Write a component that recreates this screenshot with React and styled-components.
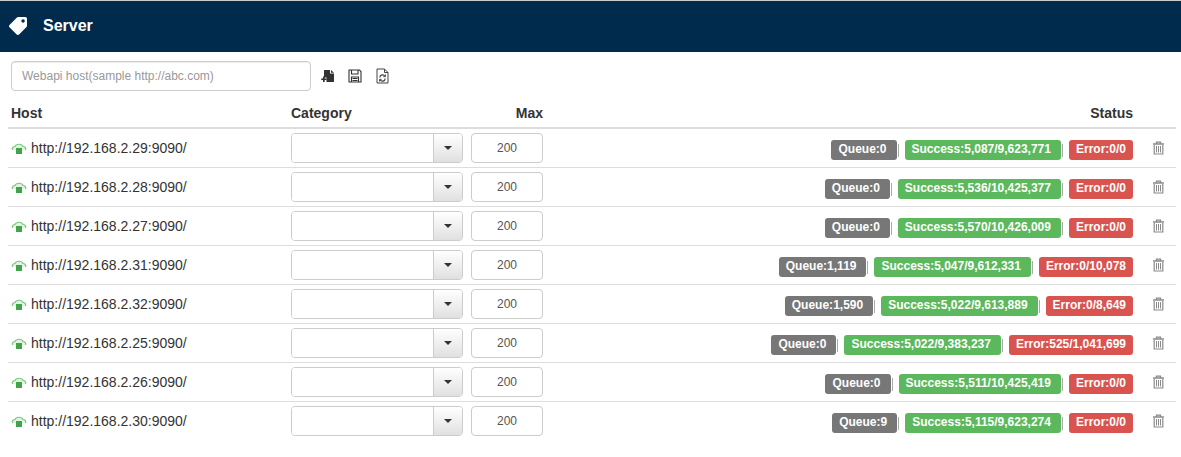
import React from "react";
import styled, { createGlobalStyle } from "styled-components";
import { FaTag } from "react-icons/fa";

const GlobalStyle = createGlobalStyle`
  html, body {
    margin: 0;
    padding: 0;
    background: #fff;
    font-family: "Liberation Sans", Arial, sans-serif;
    font-size: 14px;
    color: #333;
  }
`;

const servers = [
  { host: "http://192.168.2.29:9090/", queue: "0", success: "5,087/9,623,771", error: "0/0" },
  { host: "http://192.168.2.28:9090/", queue: "0", success: "5,536/10,425,377", error: "0/0" },
  { host: "http://192.168.2.27:9090/", queue: "0", success: "5,570/10,426,009", error: "0/0" },
  { host: "http://192.168.2.31:9090/", queue: "1,119", success: "5,047/9,612,331", error: "0/10,078" },
  { host: "http://192.168.2.32:9090/", queue: "1,590", success: "5,022/9,613,889", error: "0/8,649" },
  { host: "http://192.168.2.25:9090/", queue: "0", success: "5,022/9,383,237", error: "525/1,041,699" },
  { host: "http://192.168.2.26:9090/", queue: "0", success: "5,511/10,425,419", error: "0/0" },
  { host: "http://192.168.2.30:9090/", queue: "9", success: "5,115/9,623,274", error: "0/0" },
];

const columns = "283px 180px 80px 1fr 43px";

const Page = styled.div`
  width: 1181px;
  height: 457px;
  overflow: hidden;
  border-top: 1px solid #c8cdd2;
  box-sizing: border-box;
  background: #fff;
`;

const TitleBar = styled.div`
  height: 51px;
  background: #002b4d;
  color: #fff;
  display: flex;
  align-items: center;
  padding: 0 0 2px 9px;
  box-sizing: border-box;
  gap: 16px;
  font-size: 16px;
  font-weight: bold;
`;

const TagIcon = styled(FaTag)`
  width: 18px;
  height: 18px;
  transform: scaleX(-1);
`;

const Toolbar = styled.div`
  display: flex;
  align-items: center;
  height: 30px;
  margin: 9px 0 0 11px;
`;

const HostInput = styled.input`
  width: 300px;
  height: 30px;
  box-sizing: border-box;
  border: 1px solid #ccc;
  border-radius: 4px;
  padding: 0 10px;
  font: 12px "Liberation Sans", Arial, sans-serif;
  box-shadow: inset 0 1px 1px rgba(0, 0, 0, 0.075);
  &::placeholder {
    color: #999;
    opacity: 1;
  }
`;

const ToolIcons = styled.div`
  display: flex;
  align-items: center;
  gap: 13px;
  margin-left: 10px;
  color: #333;
`;

const Table = styled.div`
  margin: 0 5px 0 8px;
`;

const HeadRow = styled.div`
  display: grid;
  grid-template-columns: ${columns};
  height: 38px;
  box-sizing: border-box;
  align-items: center;
  padding-top: 8px;
  border-bottom: 2px solid #ddd;
  font-size: 14px;
  font-weight: bold;
  color: #333;
`;

const HeadCell = styled.div`
  padding-left: ${(p) => p.$pad || 0}px;
  padding-right: ${(p) => (p.$right ? 43 : 0)}px;
  text-align: ${(p) => (p.$align ? "right" : "left")};
  grid-column: ${(p) => (p.$right ? "4 / 6" : "auto")};
`;

const MaxLabel = styled.span`
  display: block;
  width: 72px;
  text-align: right;
`;

const Row = styled.div`
  display: grid;
  grid-template-columns: ${columns};
  height: 39px;
  box-sizing: border-box;
  align-items: center;
  border-bottom: 1px solid #ddd;
  &:last-child {
    border-bottom-color: transparent;
  }
`;

const HostCell = styled.div`
  display: flex;
  align-items: center;
  gap: 4px;
  padding-left: 3px;
  font-size: 14px;
  color: #333;
`;

const CategoryCombo = styled.div`
  display: flex;
  width: 172px;
  height: 30px;
  box-sizing: border-box;
  border: 1px solid #ccc;
  border-radius: 4px;
  overflow: hidden;
`;

const ComboText = styled.div`
  flex: 1;
  background: #fff;
`;

const ComboButton = styled.div`
  width: 28px;
  border-left: 1px solid #ccc;
  background: linear-gradient(to bottom, #fff, #e0e0e0);
  display: flex;
  align-items: center;
  justify-content: center;
  &::after {
    content: "";
    border-top: 4px solid #333;
    border-left: 4px solid transparent;
    border-right: 4px solid transparent;
  }
`;

const MaxInput = styled.div`
  width: 72px;
  height: 30px;
  box-sizing: border-box;
  border: 1px solid #ccc;
  border-radius: 4px;
  display: flex;
  align-items: center;
  justify-content: center;
  font-size: 12px;
  color: #555;
`;

const StatusCell = styled.div`
  display: flex;
  justify-content: flex-end;
  align-items: center;
  padding-top: 4px;
`;

const Badge = styled.span`
  height: 20px;
  line-height: 18px;
  padding: 0 ${(p) => (p.$trail ? 10 : 7)}px 0 7px;
  border-radius: 3px;
  font-size: 12px;
  font-weight: bold;
  color: #fff;
  white-space: nowrap;
  background: ${(p) => p.$bg};
`;

const Divider = styled.span`
  width: 1px;
  height: 13px;
  background: #aaa;
  margin: 0 6px 0 1px;
`;

const DeleteCell = styled.div`
  display: flex;
  justify-content: flex-end;
  padding-right: 11px;
  color: #8a8a8a;
`;

function CloudHome() {
  return (
    <svg width="16" height="16" viewBox="0 0 16 16">
      <path
        d="M1.500 10 C0.500 8 2.500 6.500 4 6.500 C5 3.500 11 3.500 12 6.500 C13.500 6.500 15.500 8 14.500 10"
        fill="#e3f3e3"
        stroke="#7cc87c"
        strokeWidth="1.200"
      />
      <rect x="5" y="8" width="6" height="6" fill="#3fa548" />
    </svg>
  );
}

function AddFileIcon() {
  return (
    <svg width="14" height="14" viewBox="0 0 14 14" fill="#333">
      <path d="M3 1h6v3.500h4V13H5.500V8.500H3z" />
      <path d="M10 1l3 2.800h-3z" />
      <path d="M2 7.500h1.700v2H5.500v1.600H3.700v2H2v-2H.2V9.500H2z" />
    </svg>
  );
}

function SaveIcon() {
  return (
    <svg width="14" height="14" viewBox="0 0 14 14" fill="none" stroke="#333" strokeWidth="1.100">
      <path d="M1 1h10.500L13 2.500V13H1z" />
      <path d="M3.500 1v4h6.500V1M3.500 13V8h7v5M4.500 9.500h5M4.500 11.500h5" />
    </svg>
  );
}

function RefreshFileIcon() {
  return (
    <svg width="14" height="16" viewBox="-1 0 14 16" fill="none" stroke="#444" strokeWidth="1">
      <path d="M1 1h7.500L12 4.500V15H1zM8.500 1v3.500H12" />
      <path d="M3.800 9.500A2.800 2.800 0 0 1 9 8.200M9.200 10.500A2.800 2.800 0 0 1 4 11.800" strokeWidth="1.200" />
      <path d="M9.500 6.500v2.200H7.300M3.500 13.500v-2.200h2.200" strokeWidth="0.900" />
    </svg>
  );
}

function TrashIcon() {
  return (
    <svg width="13" height="14" viewBox="0 0 13 14" fill="none" stroke="currentColor">
      <path d="M1 3h11M4.500 3V1.200h4V3" strokeWidth="1.300" />
      <path d="M2.200 4v9h8.600V4" strokeWidth="1.200" />
      <path d="M4.500 5v6.500M6.500 5v6.500M8.500 5v6.500" strokeWidth="1" />
    </svg>
  );
}

export default function App() {
  return (
    <Page>
      <GlobalStyle />
      <TitleBar>
        <TagIcon />
        <span>Server</span>
      </TitleBar>
      <Toolbar>
        <HostInput placeholder="Webapi host(sample http://abc.com)" />
        <ToolIcons>
          <AddFileIcon />
          <SaveIcon />
          <RefreshFileIcon />
        </ToolIcons>
      </Toolbar>
      <Table>
        <HeadRow>
          <HeadCell $pad={3}>Host</HeadCell>
          <HeadCell>Category</HeadCell>
          <HeadCell $align>
            <MaxLabel>Max</MaxLabel>
          </HeadCell>
          <HeadCell $right $align>Status</HeadCell>
        </HeadRow>
        {servers.map((s) => (
          <Row key={s.host}>
            <HostCell>
              <CloudHome />
              {s.host}
            </HostCell>
            <CategoryCombo>
              <ComboText />
              <ComboButton />
            </CategoryCombo>
            <MaxInput>200</MaxInput>
            <StatusCell>
              <Badge $bg="#777" $trail>Queue:{s.queue}</Badge>
              <Divider />
              <Badge $bg="#5cb85c" $trail>Success:{s.success}</Badge>
              <Divider />
              <Badge $bg="#d9534f">Error:{s.error}</Badge>
            </StatusCell>
            <DeleteCell>
              <TrashIcon />
            </DeleteCell>
          </Row>
        ))}
      </Table>
    </Page>
  );
}
